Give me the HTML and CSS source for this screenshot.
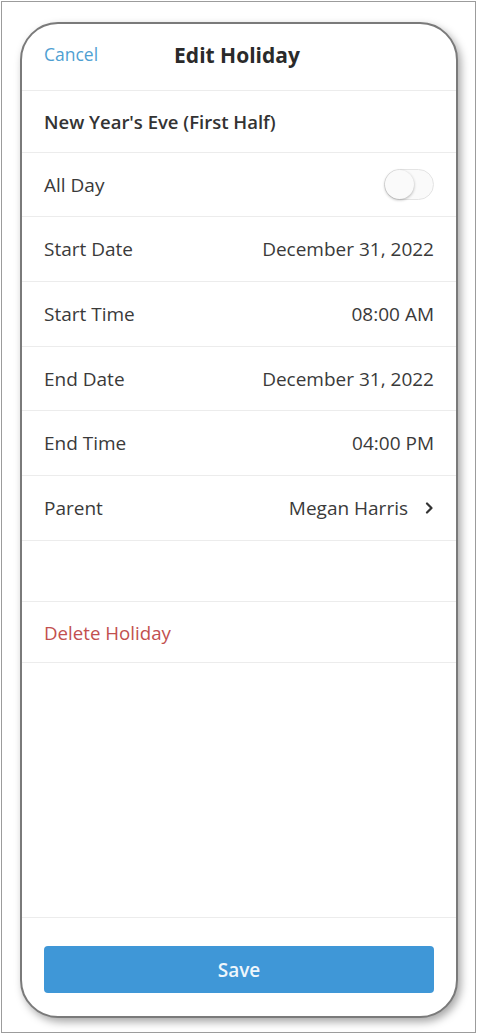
FILE: index.html
```html
<!DOCTYPE html>
<html>
<head>
<meta charset="utf-8">
<link rel="stylesheet" href="styles.css">
</head>
<body>
<div class="frame">
  <div class="phone">
    <div class="header">
      <span class="cancel">Cancel</span>
      <span class="title">Edit Holiday</span>
    </div>
    <div class="row name">New Year's Eve (First Half)</div>
    <div class="row h64">
      <span>All Day</span>
      <span class="toggle"><span class="knob"></span></span>
    </div>
    <div class="row"><span>Start Date</span><span>December 31, 2022</span></div>
    <div class="row"><span>Start Time</span><span>08:00 AM</span></div>
    <div class="row h64"><span>End Date</span><span>December 31, 2022</span></div>
    <div class="row"><span>End Time</span><span>04:00 PM</span></div>
    <div class="row">
      <span>Parent</span>
      <span class="value-link">Megan Harris
        <svg class="chev" width="10" height="14" viewBox="0 0 10 14"><path d="M3 2.5 L7.5 7 L3 11.5" fill="none" stroke="#333" stroke-width="2.2" stroke-linecap="round" stroke-linejoin="round"/></svg>
      </span>
    </div>
    <div class="row empty"></div>
    <div class="row delete">Delete Holiday</div>
    <div class="spacer"></div>
    <div class="footer">
      <div class="save">Save</div>
    </div>
  </div>
</div>
</body>
</html>
```

FILE: styles.css
```css
* { box-sizing: border-box; }
html, body { margin: 0; padding: 0; background: #fff; }
body {
  font-family: "Open Sans", "Noto Sans", sans-serif;
  color: #3a3a3a;
}
.frame {
  margin: 1px 0 0 1px;
  width: 475px;
  height: 1032px;
  border: 1px solid #9c9c9c;
  padding: 20px 0 0 18px;
}
.phone {
  width: 438px;
  height: 996px;
  border: 2px solid #7a7a7a;
  border-radius: 38px;
  background: #fff;
  box-shadow: 3px 4px 8px rgba(0, 0, 0, 0.35);
  display: flex;
  flex-direction: column;
  overflow: hidden;
}
.header {
  height: 67px;
  flex: none;
  display: flex;
  align-items: center;
  justify-content: center;
  position: relative;
  border-bottom: 1px solid #ececec;
}
.cancel {
  position: absolute;
  left: 22px;
  top: 18px;
  font-size: 17.5px;
  font-weight: 500;
  color: #4f9fd2;
}
.title {
  font-size: 21px;
  font-weight: 700;
  color: #2a2a2a;
  margin-left: -4px;
  margin-top: -4px;
}
.row {
  height: 65px;
  flex: none;
  display: flex;
  align-items: center;
  justify-content: space-between;
  padding: 0 22px;
  font-size: 19px;
  border-bottom: 1px solid #ececec;
}
.row.h64 { height: 64px; }
.row.name {
  height: 62px;
  font-size: 18.5px;
  font-weight: 600;
  color: #333;
}
.row.empty { height: 61px; }
.row.delete { height: 61px; font-size: 18.7px; color: #c2504f; }
.toggle {
  width: 50px;
  height: 31px;
  border-radius: 16px;
  border: 1px solid #e4e4e4;
  background: #fafafa;
  position: relative;
  display: block;
}
.knob {
  position: absolute;
  left: 0;
  top: 0;
  width: 29px;
  height: 29px;
  border-radius: 50%;
  background: #fafafa;
  box-shadow: 0 1px 3px rgba(0,0,0,0.3);
}
.value-link {
  display: flex;
  align-items: center;
  gap: 16px;
}
.chev { display: block; }
.spacer { flex: 1; border-bottom: 1px solid #ececec; }
.footer {
  height: 98px;
  flex: none;
  padding: 28px 22px 0 22px;
}
.save {
  height: 47px;
  background: #3f97d7;
  border-radius: 4px;
  color: #eef6fc;
  font-size: 19px;
  font-weight: 600;
  display: flex;
  align-items: center;
  justify-content: center;
}
```
